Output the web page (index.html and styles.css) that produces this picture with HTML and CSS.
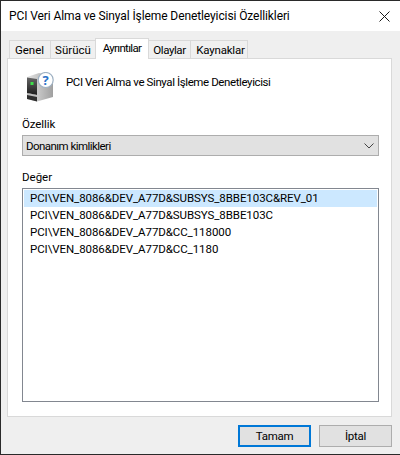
FILE: index.html
```html
<!DOCTYPE html>
<html lang="tr">
<head>
<meta charset="utf-8">
<title>PCI Veri Alma ve Sinyal İşleme Denetleyicisi Özellikleri</title>
<link rel="stylesheet" href="styles.css">
</head>
<body>
<div class="window">
  <header class="titlebar">
    <span class="title">PCI Veri Alma ve Sinyal İşleme Denetleyicisi Özellikleri</span>
    <svg class="close" width="11" height="11" viewBox="0 0 11 11"><path d="M.5.5l10 10M10.500.5l-10 10" stroke="#1a1a1a" stroke-width="1" fill="none"/></svg>
  </header>
  <div class="body">
    <nav class="tabs">
      <span class="tab tab-genel">Genel</span>
      <span class="tab tab-surucu">Sürücü</span>
      <span class="tab tab-active">Ayrıntılar</span>
      <span class="tab tab-olaylar">Olaylar</span>
      <span class="tab tab-kaynak">Kaynaklar</span>
    </nav>
    <section class="panel">
      <div class="device">
        <svg class="device-icon" width="32" height="32" viewBox="0 0 32 32">
          <defs>
            <linearGradient id="front" x1="0" y1="0" x2="0" y2="1"><stop offset="0" stop-color="#666"/><stop offset="1" stop-color="#1c1c1c"/></linearGradient>
            <linearGradient id="side" x1="0" y1="0" x2="1" y2="0"><stop offset="0" stop-color="#e4e4e4"/><stop offset="1" stop-color="#a0a0a0"/></linearGradient>
          </defs>
          <path d="M2 5 14 1 28 4 28 25 12 29.500 2 27Z" fill="url(#side)"/>
          <path d="M2 5.500 12 7 12 23 2 21Z" fill="url(#front)"/>
          <path d="M2 21 12 23 12 29.500 2 27Z" fill="#2e2e2e"/>
          <path d="M2 21 12 23 12 25 2 23Z" fill="#bdbdbd"/>
          <rect x="5.500" y="10" width="3" height="3" fill="#3ce04a"/>
          <circle cx="20.700" cy="8" r="7.500" fill="#fff" stroke="#9fb2c4" stroke-width="1.200"/>
          <text class="q" x="20.700" y="12.500" text-anchor="middle">?</text>
        </svg>
        <span class="device-name">PCI Veri Alma ve Sinyal İşleme Denetleyicisi</span>
      </div>
      <div class="label label-prop">Özellik</div>
      <div class="combo">
        <span class="combo-text">Donanım kimlikleri</span>
        <svg class="chevron" width="10" height="6" viewBox="0 0 10 6"><path d="M.5.5 5 5 9.500.5" stroke="#444" stroke-width="1" fill="none"/></svg>
      </div>
      <div class="label label-value">Değer</div>
      <ul class="list">
        <li class="row row-selected">PCI\VEN_8086&amp;DEV_A77D&amp;SUBSYS_8BBE103C&amp;REV_01</li>
        <li class="row">PCI\VEN_8086&amp;DEV_A77D&amp;SUBSYS_8BBE103C</li>
        <li class="row">PCI\VEN_8086&amp;DEV_A77D&amp;CC_118000</li>
        <li class="row">PCI\VEN_8086&amp;DEV_A77D&amp;CC_1180</li>
      </ul>
    </section>
    <footer class="buttons">
      <button class="btn btn-default">Tamam</button>
      <button class="btn">İptal</button>
    </footer>
  </div>
</div>
</body>
</html>
```

FILE: styles.css
```css
* { box-sizing: border-box; }
html, body { margin: 0; padding: 0; height: 100%; }
body { font-family: Roboto, "Open Sans", sans-serif; font-size: 11.500px; color: #000; overflow: hidden; }

.window {
  width: 400px;
  height: 455px;
  display: flex;
  flex-direction: column;
  border-top: 1px solid #2a2a2a;
  border-left: 1px solid #2a2a2a;
  border-bottom: 1px solid #2a2a2a;
  background: #efefef;
}
.titlebar {
  height: 30px;
  flex: none;
  background: #fff;
  display: flex;
  align-items: center;
  justify-content: space-between;
  padding: 0 10px 0 8px;
}
.title { font-size: 12px; letter-spacing: -0.1px; white-space: nowrap; }
.close { display: block; }

.body { flex: 1; display: flex; flex-direction: column; padding: 7px 8px 0 6px; }
.tabs { height: 20px; display: flex; align-items: flex-end; padding-left: 2px; position: relative; z-index: 1; }
.tab {
  height: 18px;
  display: flex;
  align-items: center;
  justify-content: center;
  background: #f0f0f0;
  border: 1px solid #d9d9d9;
  border-bottom: none;
  margin-left: -1px;
  white-space: nowrap;
}
.tab-genel { width: 42px; margin-left: 0; padding-right: 1px; }
.tab-surucu { width: 46px; }
.tab-active { width: 54px; height: 21px; background: #fff; padding-bottom: 2px; margin-bottom: -1px; letter-spacing: -0.7px; }
.tab-olaylar { width: 43px; letter-spacing: -0.4px; }
.tab-kaynak { width: 58px; padding-left: 3px; letter-spacing: -0.2px; }

.panel {
  height: 359px;
  flex: none;
  background: #fff;
  border: 1px solid #d9d9d9;
  display: flex;
  flex-direction: column;
  padding: 0 12px 0 14px;
}
.device { display: flex; align-items: flex-start; padding-top: 13px; height: 57px; }
.device-icon { display: block; margin: 0 0 0 3px; flex: none; }
.device-name { margin: 3px 0 0 9px; letter-spacing: -0.4px; white-space: nowrap; }
.q { font: bold 13px "Open Sans", sans-serif; fill: #2a72c8; }

.label { height: 16px; line-height: 16px; }
.label-prop { margin-bottom: 3px; letter-spacing: -0.1px; }
.label-value { margin-top: 13px; margin-bottom: 3px; }

.combo {
  height: 21px;
  flex: none;
  background: #e1e1e1;
  border: 1px solid #adadad;
  display: flex;
  align-items: center;
  justify-content: space-between;
  padding: 0 4px 0 3px;
}
.combo-text { letter-spacing: -0.55px; }
.chevron { display: block; }

.list {
  list-style: none;
  margin: 0;
  padding: 1px;
  height: 214px;
  flex: none;
  border: 1px solid #828790;
  background: #fff;
}
.row { height: 17px; line-height: 17px; padding-left: 6px; letter-spacing: -0.08px; white-space: nowrap; }
.row-selected { background: #cce8ff; }

.buttons { display: flex; justify-content: flex-end; gap: 8px; padding-top: 8px; }
.btn {
  width: 73px;
  height: 22px;
  background: #e1e1e1;
  border: 1px solid #adadad;
  font: inherit;
  letter-spacing: -0.3px;
  color: #000;
  padding: 0;
}
.btn-default { border: 2px solid #0078d7; }
```
